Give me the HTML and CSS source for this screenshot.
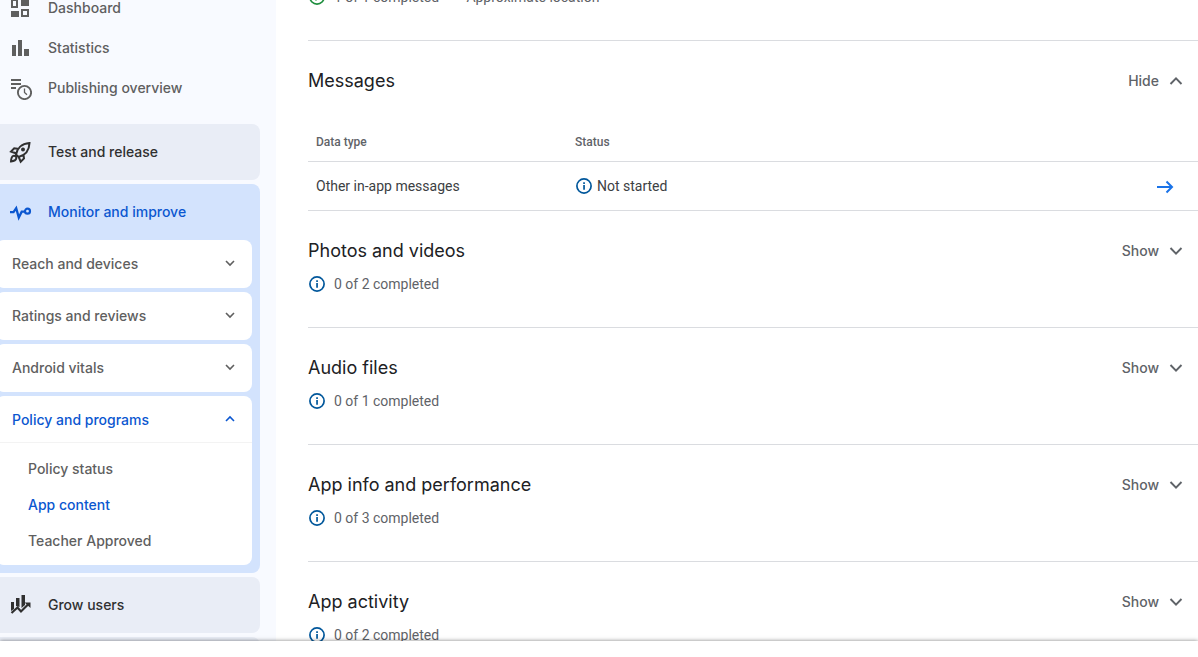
FILE: index.html
```html
<!DOCTYPE html>
<html lang="en">
<head>
<meta charset="utf-8">
<title>App content</title>
<link rel="stylesheet" href="styles.css">
</head>
<body>
<svg class="symbols" aria-hidden="true">
  <symbol id="info" viewBox="0 0 16 16"><circle cx="8" cy="8" r="7.1" fill="none" stroke="currentColor" stroke-width="1.7"/><path d="M7.2 7h1.700v4.700H7.200zM7.200 4.200h1.700v1.700H7.200z" fill="currentColor"/></symbol>
  <symbol id="down" viewBox="0 0 14 14"><path d="M1.500 4l5.500 5.700L12.500 4" fill="none" stroke="currentColor" stroke-width="1.900"/></symbol>
  <symbol id="up" viewBox="0 0 14 14"><path d="M1.500 10L7 4.300 12.500 10" fill="none" stroke="currentColor" stroke-width="1.900"/></symbol>
  <symbol id="small-down" viewBox="0 0 12 12"><path d="M2 3l4 4 4-4" fill="none" stroke="currentColor" stroke-width="1.600"/></symbol>
  <symbol id="small-up" viewBox="0 0 12 12"><path d="M2 7l4-4 4 4" fill="none" stroke="currentColor" stroke-width="1.600"/></symbol>
</svg>
<div class="viewport">
  <nav class="sidebar" aria-label="Main">
    <ul class="nav-list">
      <li><a class="nav-link" href="#"><svg class="nav-icon" viewBox="0 0 24 24"><path d="M4 4h5v7H4zM14 14h6v6h-6z" fill="none" stroke="currentColor" stroke-width="2"/><path d="M13 3h8v7h-8zM3 15h8v6H3z" fill="currentColor"/></svg>Dashboard</a></li>
      <li><a class="nav-link" href="#"><svg class="nav-icon" viewBox="0 0 24 24"><path d="M4 9h4v11H4zM10 4h4v16h-4zM16 13h5v7h-5z" fill="currentColor"/></svg>Statistics</a></li>
      <li><a class="nav-link" href="#"><svg class="nav-icon" viewBox="0 0 24 24"><path d="M3 4h10M3 8h10M3 12h5" fill="none" stroke="currentColor" stroke-width="2"/><path d="M16.500 12.500v4l2.500 2.300" fill="none" stroke="currentColor" stroke-width="1.300"/><circle cx="16.500" cy="16.500" r="6.600" fill="none" stroke="currentColor" stroke-width="1.900"/></svg>Publishing overview</a></li>
    </ul>
    <ul class="groups">
      <li class="group"><a class="group-link" href="#"><svg class="nav-icon" viewBox="0 0 24 24"><path d="M8 14.500C9 9 13 3.500 21.500 3c-.3 8-5 12.500-11 14zM9.800 8.700l-3.600-.5L3 11.500l5.500 2M15.500 15l.5 3.500-3.300 3.200-2.200-5.200M3 21.500c.1-3 .6-5 2.300-5.700 1.500-.6 3.300.9 3 2.500C8 20 6.200 21.200 3 21.500z" fill="none" stroke="currentColor" stroke-width="2"/><circle cx="15" cy="9.500" r="2" fill="currentColor"/></svg>Test and release</a></li>
      <li class="group group-open">
        <a class="group-link" href="#"><svg class="nav-icon" viewBox="0 0 24 24"><path d="M2 12.200h3.500l2.700-4 2.600 9.300 2.900-5.800H17" fill="none" stroke="currentColor" stroke-width="2.300"/><circle cx="19.500" cy="11.200" r="2.500" fill="none" stroke="currentColor" stroke-width="2.200"/></svg>Monitor and improve</a>
        <div class="cards">
          <div class="card"><button class="card-head">Reach and devices<svg class="small-chevron"><use href="#small-down"/></svg></button></div>
          <div class="card"><button class="card-head">Ratings and reviews<svg class="small-chevron"><use href="#small-down"/></svg></button></div>
          <div class="card"><button class="card-head">Android vitals<svg class="small-chevron"><use href="#small-down"/></svg></button></div>
          <div class="card">
            <button class="card-head card-head-open" aria-expanded="true">Policy and programs<svg class="small-chevron"><use href="#small-up"/></svg></button>
            <ul class="sub-list">
              <li><a class="sub-link" href="#">Policy status</a></li>
              <li><a class="sub-link sub-current" href="#">App content</a></li>
              <li><a class="sub-link" href="#">Teacher Approved</a></li>
            </ul>
          </div>
        </div>
      </li>
      <li class="group"><a class="group-link" href="#"><svg class="nav-icon" viewBox="0 0 24 24"><path d="M3 9h3v7l-3 2zM8 5h3.500v9L8 13zM13.500 2h3.500v10l-3.500 3z" fill="currentColor"/><path d="M3.500 20l6-5.500 3.500 4 7-7" fill="none" stroke="currentColor" stroke-width="2.200"/><path d="M16.500 9.500h6V15z" fill="currentColor"/></svg>Grow users</a></li>
      <li class="group"><a class="group-link" href="#" aria-label="More"></a></li>
    </ul>
  </nav>
  <main class="content">
    <section class="section section-first">
      <p class="progress"><svg class="status-icon done" viewBox="0 0 16 16"><circle cx="8" cy="8" r="7.100" fill="none" stroke="currentColor" stroke-width="1.700"/><path d="M4.500 8.200L7 10.700l5-5" fill="none" stroke="currentColor" stroke-width="1.700"/></svg>1 of 1 completed <span>–</span> Approximate location</p>
    </section>
    <section class="section section-table">
      <div class="section-head"><h2 class="title">Messages</h2><button class="toggle" aria-expanded="true">Hide<svg class="chevron"><use href="#up"/></svg></button></div>
      <table class="data-table">
        <thead><tr><th class="type-col">Data type</th><th>Status</th><th class="action-col" aria-label="Open"></th></tr></thead>
        <tbody><tr><td>Other in-app messages</td><td><span class="status"><svg class="status-icon"><use href="#info"/></svg>Not started</span></td><td class="action-col"><a class="open-link" href="#" aria-label="Open other in-app messages"><svg class="arrow" viewBox="0 0 18 14"><path d="M1 7h15M10.500 1.500L16 7l-5.500 5.500" fill="none" stroke="currentColor" stroke-width="2"/></svg></a></td></tr></tbody>
      </table>
    </section>
    <section class="section">
      <div class="section-head"><h2 class="title">Photos and videos</h2><button class="toggle">Show<svg class="chevron"><use href="#down"/></svg></button></div>
      <p class="progress"><svg class="status-icon"><use href="#info"/></svg>0 of 2 completed</p>
    </section>
    <section class="section">
      <div class="section-head"><h2 class="title">Audio files</h2><button class="toggle">Show<svg class="chevron"><use href="#down"/></svg></button></div>
      <p class="progress"><svg class="status-icon"><use href="#info"/></svg>0 of 1 completed</p>
    </section>
    <section class="section">
      <div class="section-head"><h2 class="title">App info and performance</h2><button class="toggle">Show<svg class="chevron"><use href="#down"/></svg></button></div>
      <p class="progress"><svg class="status-icon"><use href="#info"/></svg>0 of 3 completed</p>
    </section>
    <section class="section">
      <div class="section-head"><h2 class="title">App activity</h2><button class="toggle">Show<svg class="chevron"><use href="#down"/></svg></button></div>
      <p class="progress"><svg class="status-icon"><use href="#info"/></svg>0 of 2 completed</p>
    </section>
  </main>
</div>
<footer class="bottom-bar"></footer>
</body>
</html>
```
FILE: styles.css
```css
* {
  box-sizing: border-box;
}

body {
  margin: 0;
  height: 100vh;
  display: flex;
  flex-direction: column;
  overflow: hidden;
  background: #fff;
  color: #3c4043;
  font: 14px/20px Roboto, sans-serif;
}

ul,
p,
h2 {
  margin: 0;
  padding: 0;
  list-style: none;
}

a {
  color: inherit;
  text-decoration: none;
}

button {
  border: 0;
  background: none;
  color: inherit;
  font: 500 14px/20px Inter, sans-serif;
  cursor: pointer;
}

.symbols {
  position: absolute;
  width: 0;
  height: 0;
}

.viewport {
  flex: 1;
  min-height: 0;
  display: flex;
  overflow: hidden;
}

.bottom-bar {
  z-index: 1;
  flex: none;
  height: 16px;
  background: #fff;
  box-shadow: 0 0 4px rgba(0, 0, 0, 0.5);
}

/* Sidebar */
.sidebar {
  flex: none;
  width: 276px;
  padding-right: 16px;
  background: #f8faff;
  color: #5f5f5f;
  font: 500 14px/20px Inter, sans-serif;
}

.nav-list {
  margin: -12px 0 16px;
}

.nav-link,
.group-link {
  display: flex;
  align-items: center;
  gap: 16px;
  height: 40px;
  padding-left: 8px;
}

.group-link {
  height: 56px;
}

.nav-icon {
  flex: none;
  width: 24px;
  height: 24px;
}

.groups,
.cards {
  display: flex;
  flex-direction: column;
  gap: 4px;
}

.group {
  border-radius: 0 8px 8px 0;
  background: #e9edf6;
  color: #303030;
}

.group-open {
  padding: 0 8px 8px 0;
  background: #d3e3fd;
  color: #0b57d0;
}

.cards {
  margin-left: -4px;
}

.card {
  border-radius: 8px;
  background: #fff;
  color: #5f5f5f;
}

.card-head {
  display: flex;
  align-items: center;
  justify-content: space-between;
  width: 100%;
  padding: 14px 16px;
}

.card-head-open {
  padding-bottom: 12px;
  border-bottom: 1px solid #f3f3f3;
  color: #0b57d0;
}

.small-chevron {
  width: 12px;
  height: 12px;
}

.sub-list {
  padding: 8px 0 6px;
}

.sub-link {
  display: block;
  padding: 8px 32px;
}

.sub-current {
  color: #0b57d0;
}

/* Content */
.content {
  flex: 1;
  min-width: 0;
  padding-left: 32px;
}

.section {
  padding: 28px 0 33px;
  border-bottom: 1px solid #dadce0;
}

.section-first {
  margin-top: -52px;
}

.section-table {
  padding-bottom: 0;
  border-bottom: 0;
}

.section-head {
  display: flex;
  align-items: center;
  justify-content: space-between;
}

.title {
  color: #202124;
  font: 400 18px/24px Inter, sans-serif;
}

.toggle {
  display: flex;
  align-items: center;
  gap: 10px;
  padding: 0 15px 0 0;
  color: #5f6368;
}

.chevron {
  width: 14px;
  height: 14px;
}

.progress {
  display: flex;
  align-items: center;
  gap: 9px;
  margin-top: 11px;
  padding-left: 1px;
  color: #5f6368;
}

.status {
  display: flex;
  align-items: center;
  gap: 5px;
  padding-left: 1px;
}

.status-icon {
  width: 16px;
  height: 16px;
  color: #01579b;
}

.done {
  color: #1e8e3e;
}

.data-table {
  width: 100%;
  margin-top: 30px;
  border-collapse: separate;
  border-spacing: 0;
}

.data-table th,
.data-table td {
  height: 49px;
  padding: 0 8px;
  border-bottom: 1px solid #dadce0;
  text-align: left;
}

.data-table th {
  height: 39px;
  color: #5f6368;
  font-size: 12px;
  font-weight: 500;
}

.data-table .type-col {
  width: 259px;
}

.data-table .action-col {
  padding-right: 24px;
  text-align: right;
}

.open-link {
  display: inline-flex;
  vertical-align: middle;
  color: #1a73e8;
}

.arrow {
  width: 18px;
  height: 14px;
}
```
